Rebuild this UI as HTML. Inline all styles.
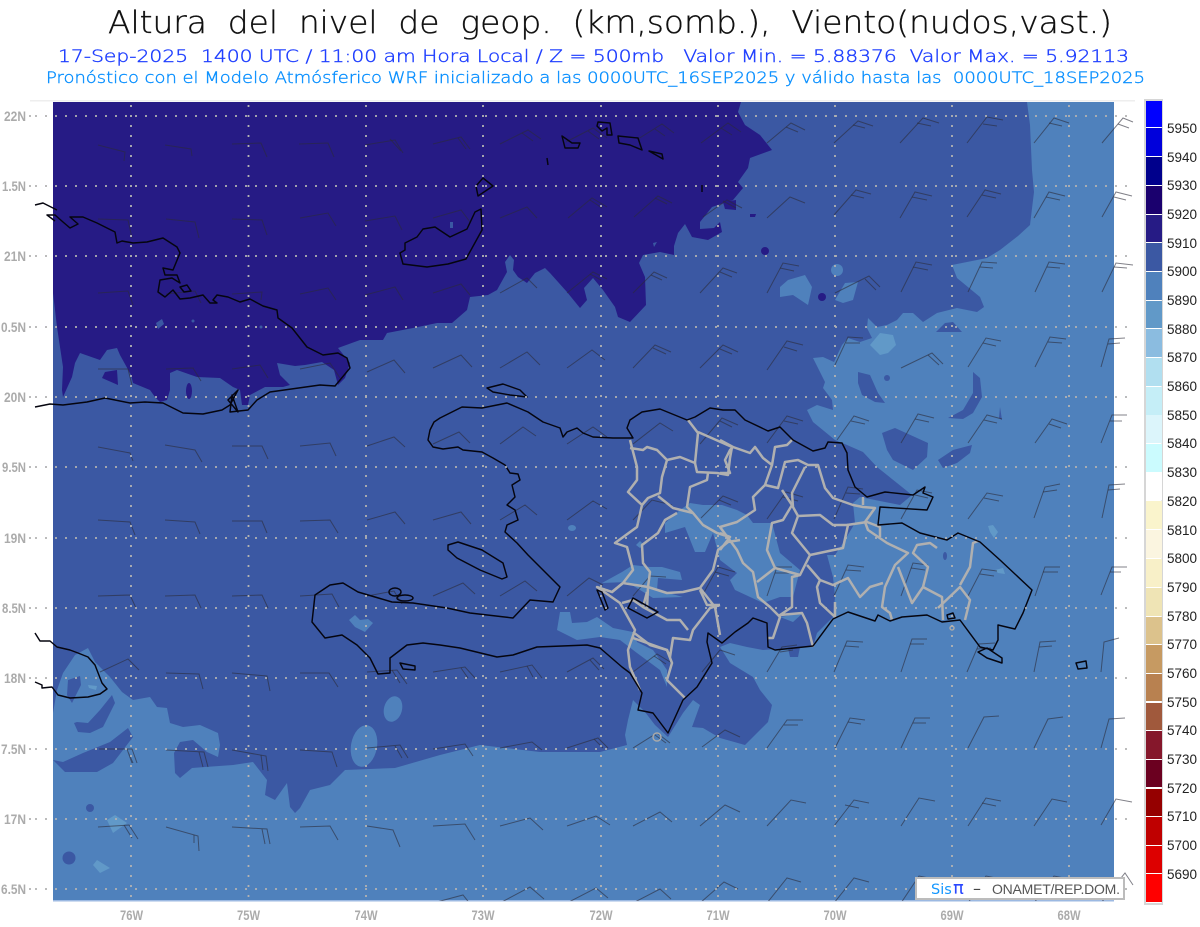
<!DOCTYPE html>
<html lang="es"><head><meta charset="utf-8"><title>Altura del nivel de geop.</title>
<style>
html,body{margin:0;padding:0;background:#fff;width:1200px;height:927px;overflow:hidden}
svg{display:block;position:absolute;left:0;top:0}
text{white-space:pre}
.t{font-family:"DejaVu Sans","Liberation Sans",sans-serif}
.ax{font-family:"Liberation Sans",sans-serif;font-weight:700;font-size:14px;fill:#ababab}
.cb{font-family:"Liberation Sans",sans-serif;font-size:13.500px;fill:#222}
</style></head><body>
<svg width="1200" height="927" viewBox="0 0 1200 927" xmlns="http://www.w3.org/2000/svg">
<defs><clipPath id="m"><rect x="53" y="102" width="1061" height="799"/></clipPath>
<clipPath id="b"><rect x="0" y="102" width="1145" height="799"/></clipPath></defs>

<text class="t" x="108" y="33" font-size="31" font-weight="200" fill="#111" stroke="#111" stroke-width=".35" textLength="1004" lengthAdjust="spacingAndGlyphs">Altura  del  nivel  de  geop.  (km,somb.),  Viento(nudos,vast.)</text>
<text class="t" x="58" y="62" font-size="17" font-weight="200" fill="#1f3fff" stroke="#1f3fff" stroke-width=".4" textLength="1071" lengthAdjust="spacingAndGlyphs">17-Sep-2025  1400 UTC / 11:00 am Hora Local / Z = 500mb   Valor Min. = 5.88376  Valor Max. = 5.92113</text>
<text class="t" x="46" y="83" font-size="16" font-weight="200" fill="#0a90ff" stroke="#0a90ff" stroke-width=".4" textLength="1099" lengthAdjust="spacingAndGlyphs">Pronóstico con el Modelo Atmósferico WRF inicializado a las 0000UTC_16SEP2025 y válido hasta las  0000UTC_18SEP2025</text>

<rect x="30" y="100" width="1105" height="1.5" fill="#eeeeee"/>
<rect x="53" y="102" width="1061" height="799" fill="#4f81bc"/>
<rect x="53" y="900" width="1061" height="1.5" fill="#9cb9e2"/>

<g clip-path="url(#m)">
<path fill="#3b58a3" d="M53 102H1027L1030 125 1032 170 1034 192 1030 225 1018 236 1000 250 987 258 952 265 957 278 980 297 984 307 977 312 957 308 937 313 923 322 913 313 903 313 897 320 887 325 877 327 868 318 867 328 872 338 860 342 848 338 842 345 834 362 823 357 813 358 825 382 823 388 832 400 833 410 817 405 807 410 813 422 835 440 847 445 863 452 877 467 897 483 912 495 900 505 860 497 853 503 855 523 843 543 835 555 827 555 833 577 835 597 833 617 817 633 813 647 800 647 798 657 790 657 788 648 763 650 747 647 730 643 720 647 730 663 753 677 760 690 772 705 768 722 755 735 745 745 720 738 703 728 692 727 700 705 693 700 683 713 668 737 655 725 645 712 633 700 628 720 625 735 627 745 600 752 540 752 480 745 440 755 395 768 345 770 330 785 310 790 300 808 295 813 290 807 287 783 275 800 265 795 267 780 253 762 233 765 205 767 192 768 180 778 175 773 174 753 180 742 193 740 207 752 218 757 220 745 218 733 200 725 183 727 170 723 167 708 157 707 150 697 133 700 122 692 110 677 95 662 88 648 75 655 63 673 57 690 53 713Z"/>
<g fill="#3b58a3">
<path d="M53 760 65 772 97 772 113 763 133 737 128 728 110 742 83 753 63 762Z"/>
<path d="M68 680 80 676 81 685 72 703 67 695Z"/>
<path d="M74 723 78 732 90 733 103 727 115 703 112 695 100 710 88 723 77 722Z"/>
<circle cx="90" cy="808" r="4"/><circle cx="69" cy="858" r="6.500"/>
<path d="M858 372 870 375 878 393 885 403 875 402 862 395 858 383Z"/>
<path d="M882 433 895 428 928 443 927 457 913 470 893 460 887 450Z"/>
<path d="M973 372 980 378 982 397 973 413 963 419 948 418 963 410 973 393Z"/>
<path d="M938 460 953 450 972 445 970 453 957 463 943 468Z"/>
<path d="M936 332 945 323 953 322 962 332Z"/>
<path d="M1000 407 1002 420 999 418Z"/><circle cx="887" cy="378" r="3"/>
<ellipse cx="945" cy="556" rx="2" ry="4"/>
</g>
<g fill="#4f81bc">
<path d="M349 620 355 615 360 620 368 619 373 623 365 632 355 627Z"/>
<ellipse cx="393" cy="709" rx="9" ry="13" transform="rotate(15 393 709)"/>
<ellipse cx="364" cy="746" rx="13" ry="21" transform="rotate(10 364 746)"/>
<path d="M557 630 560 612 570 612 572 623 587 622 597 617 613 628 633 632 637 642 653 650 667 670 667 687 660 670 637 653 620 640 600 637 577 640Z"/>
<path d="M602 583 622 572 633 565 650 567 662 567 680 572 682 580 658 578 657 590 683 597 653 598 627 582Z"/>
<path d="M720 525 737 522 747 515 753 523 772 523 780 553 800 570 793 597 780 597 763 603 735 590 730 580 737 573 720 560Z"/>
<path d="M690 503 703 505 722 505 737 510 747 515 737 525 720 560 713 533 705 552 695 552 685 527 665 533 665 523 680 510Z"/>
<path d="M780 617 803 613 793 622Z"/>
<path d="M780 287 788 280 805 275 812 287 808 305 793 295 780 297Z"/>
<circle cx="837" cy="270" r="6"/>
<path d="M845 283 858 282 853 300 843 303 835 300Z"/>
<path d="M636 545 640 541 644 545 640 548Z"/><path d="M450 221 454 222 453 228 450 228Z"/>
<ellipse cx="572" cy="528" rx="4" ry="3"/>
</g>
<path fill="#261b85" d="M53 102H741L738 112 745 125 760 135 772 150 750 158 748 168 738 182 743 188 733 200 712 207 700 222 700 229 714 228 720 222 722 232 708 240 692 237 685 224 678 233 674 246 674 255 660 252 643 255 639 263 645 277 646 305 630 322 618 317 615 307 603 290 593 278 584 288 587 300 580 308 567 292 550 273 545 268 535 273 527 283 518 277 513 270 514 260 510 255 505 262 507 272 497 290 488 295 470 297 467 310 452 323 437 323 413 328 387 333 383 340 360 340 338 348 350 363 345 378 338 385 334 370 322 362 305 365 295 366 277 363 280 375 290 385 283 387 265 387 250 395 248 405 242 405 240 390 233 387 220 378 197 377 177 370 170 373 170 390 167 400 160 402 155 397 150 390 133 383 131 375 120 355 117 348 107 350 100 360 80 353 75 363 72 377 63 397 62 390 63 367 57 327 53 293Z"/>
<g fill="#261b85">
<path d="M117 370 118 385 102 378 105 372Z"/><ellipse cx="189" cy="391" rx="3" ry="8"/>
<circle cx="765" cy="251" r="4"/><path d="M750 214 756 214 755 217 750 217Z"/><circle cx="822" cy="297" r="4"/>
<path d="M723 202 736 200 736 210 725 209Z"/>
</g>
<g fill="#3b58a3">
<path d="M156 323 162 319 164 324 158 329Z"/><circle cx="193" cy="321" r="1.500"/><circle cx="261" cy="327" r="1.500"/>
<path d="M450 222 453 222 453 228 450 228Z"/><path d="M653 243 657 242 654 247Z"/>
</g>
<g fill="#6199c8">
<path d="M870 345 880 333 893 335 896 345 888 353 880 355Z"/>
<path d="M97 860 110 868 100 873 93 865Z"/>
<path d="M107 820 115 815 127 823 113 833Z"/>
<path d="M88 685 97 686 96 690 89 688Z"/>
<path d="M988 526 993 525 998 532 994 538 990 532Z"/>
<path d="M995 570 1003 568 1005 574 998 573Z"/>
</g>
</g>

<g fill="none" stroke="#2b2b38" stroke-width="1" stroke-opacity=".6" clip-path="url(#b)">
<path d="M98 145l27 7l-1 9M165 145l26 4l1 7M232 144l29 -1l6 14M299 144l29 -1l6 14M365 145l30 -5l8 13M433 144l28 -7l9 12M500 144l28 -14l13 9M566 142l27 -14l14 10M638 139l24 -15l12 9M701 143l27 -20l13 9M767 143l24 -20l14 7M834 143l24 -22l15 5M900 143l23 -25l16 5M967 143l20 -26l16 3M1034 143l20 -25l15 5M1102 143l21 -25l10 4"/>
<path d="M98 219l30 1l4 18M166 219l29 3l4 16M232 219l30 1l5 15M300 218l28 -5l8 13M365 221l30 -5l7 14M433 218l28 -8l9 12M500 218l27 -11l10 11M568 218l24 -20l15 9M634 217l24 -21l14 7M703 217l24 -17l15 8M767 218l23 -21l15 6M834 215l22 -25l15 4M900 218l15 -26l17 4M967 217l18 -27l16 4M1034 218l15 -26l16 4M1102 217l14 -25l16 4"/>
<path d="M98 293l30 -2l5 14M166 294l29 -3l6 12M232 294l30 -2l-1 8M300 294l28 -6l8 12M365 295l30 -8l8 13M433 293l28 -9l9 11M500 293l27 -15l10 10M567 293l26 -21l14 7M633 293l21 -21l13 6M700 293l23 -25l14 5M767 293l16 -30l16 3M835 293l34 -17l11 11M901 292l15 -30l16 3M968 292l14 -30l15 1M1035 292l14 -30l16 2M1102 292l14 -29l17 2"/>
<path d="M98 369l30 0l4 16M166 369l27 -1l8 13M232 369l28 -4l8 13M300 369l30 -6l10 15M367 372l27 -12l11 13M433 368l28 -13l11 12M500 368l27 -16l13 13M567 368l25 -18l13 10M633 368l22 -23l16 7M700 368l23 -23l15 7M767 370l20 -29l16 4M834 367l14 -30l15 1M901 368l31 -15l11 11M968 367l18 -29l15 3M1035 367l15 -30l16 2M1101 367l8 -28l16 -1"/>
<path d="M98 447l32 6l3 8M165 445l30 5l7 12M232 446l30 0l6 13M300 446l30 -3l6 13M367 446l27 -9l11 10M433 444l26 -12l11 11M500 444l23 -17l13 9M567 444l26 -17l14 10M633 444l27 -21l13 8M700 444l22 -26l16 7M767 443l20 -27l16 5M837 440l17 -24l15 5M901 443l17 -29l16 4M968 443l19 -28l15 4M1035 443l17 -24l15 5M1101 443l11 -28l15 0"/>
<path d="M98 520l32 2l5 13M165 520l30 2l5 12M232 521l30 0l5 12M300 521l30 -1l8 13M367 520l28 -8l10 12M433 520l28 -8l10 12M500 520l25 -15l12 10M567 520l26 -19l14 8M633 520l19 -20l20 5M701 518l22 -22l15 6M767 519l19 -27l17 5M834 519l14 -32l15 2M901 519l16 -29l15 3M968 519l19 -26l16 3M1034 518l11 -31l15 -3M1102 518l7 -33l16 -1"/>
<path d="M98 596l32 -1l6 13M165 596l30 -1l6 13M232 596l30 -1l6 13M300 596l32 -2l7 13M367 596l27 -5l8 13M433 596l30 -13l12 11M500 596l25 -15l12 10M567 596l22 -18l14 7M633 596l17 -20l16 1M702 596l16 -29l17 5M767 596l10 -29l15 0M834 596l14 -31l16 2M901 596l12 -33l15 2M968 596l14 -27l15 2M1035 596l10 -29l15 0M1101 595l11 -28l15 0"/>
<path d="M100 672l28 -13l11 11M166 673l33 1l4 15M232 673l35 3l3 15M300 673l29 0l9 14M367 672l30 -2l10 14M433 672l32 -5l10 11M500 672l32 -7l10 13M567 672l26 -14l11 11M633 672l24 -18l15 9M702 672l18 -22l15 5M767 672l15 -25l15 -2M834 672l13 -31l16 1M901 672l11 -33l15 0M967 672l12 -28l16 -1M1034 672l6 -30l16 -1M1101 672l3 -30l15 -4"/>
<path d="M99 749l33 0l5 14M166 750l38 2l4 15M232 750l34 6l2 15M300 750l32 2l5 15M367 748l33 -3l8 13M433 749l32 -5l8 12M500 748l32 -6l10 8M567 748l31 -10l10 10M633 748l24 -15l13 10M702 747l23 -17l15 7M767 748l20 -28l16 0M835 748l15 -30l15 2M901 748l14 -30l15 0M968 748l16 -31l15 -1M1034 748l14 -29l15 -2M1101 748l8 -29l16 -1"/>
<path d="M98 827l31 -2l9 14M166 827l32 9l1 15M232 827l35 2l3 15M300 827l30 -1l8 14M367 826l26 4l7 17M433 826l32 -2l10 16M500 826l30 -8l13 12M567 826l29 -10l14 9M633 826l27 -14l12 10M700 826l25 -21l15 7M767 826l24 -26l15 3M834 826l20 -26l15 3M901 826l18 -28l16 3M968 826l18 -28l15 3M1034 826l18 -27l15 3M1101 825l15 -26l16 3"/>
<path d="M433 903l30 -8l8 10M500 903l30 -16l14 12M567 903l29 -15l12 10M633 903l27 -14l11 10M700 903l24 -21l14 7M767 903l20 -25l14 4M834 903l20 -25l15 4M901 903l18 -27l15 3M968 903l18 -27l15 3M1034 903l20 -27l15 3M1101 903l24 -30l8 12"/>
<path d="M390 139l11 12M458 138l8 11M522 133l11 8M588 131l11 8M655 129l10 7M721 128l11 7M786 127l12 5M853 125l12 3M917 123l14 3M983 124l14 2M1049 123l13 3M1118 124l11 4"/>
<path d="M590 200l12 8M655 198l12 6M723 201l13 7M851 195l13 3M912 197l15 3M982 195l14 3M1046 197l14 3M1114 197l12 3"/>
<path d="M590 274l11 6M651 275l11 5M720 272l12 5M780 268l14 3M865 279l11 11M913 267l15 3M980 267l13 1M1047 267l13 1M1114 267l13 1"/>
<path d="M653 348l13 6M720 349l12 5M784 347l13 4M846 343l14 0M928 355l11 10M983 343l13 3M1048 342l14 1M1108 344l12 -1"/>
<path d="M720 421l12 6M784 421l14 3M851 421l14 3M915 419l14 3M984 420l13 3M1049 424l12 4M1110 421l12 0"/>
<path d="M719 500l12 5M783 497l15 4M846 493l14 1M915 495l13 3M984 498l15 3M1043 492l14 -2M1108 490l12 -1"/>
<path d="M715 572l14 4M775 573l15 0M846 570l15 1M911 568l14 2M980 574l14 2M1043 572l15 0M1110 572l11 0"/>
<path d="M392 670l8 13M461 668l7 10M527 666l6 11M590 660l9 10M654 656l12 8M780 652l13 -2M845 646l14 1M910 644l14 0M977 649l14 -1M1039 647l13 -1"/>
<path d="M127 749l5 14M128 752l5 11M199 752l4 15M261 755l2 15M395 746l7 12M594 739l9 9M655 735l11 8M784 725l14 0M848 722l13 2M913 723l13 0"/>
<path d="M124 825l8 13M194 835l0 8M262 829l3 15M845 805l14 3M982 803l14 3"/>
</g>

<g fill="none" stroke="#b0b0b0" stroke-width="2.500" stroke-linejoin="round" clip-path="url(#m)">
<path d="M630 440 637 467 637 480 628 492 642 505 637 527 615 543 627 547 633 570 623 583 612 592 597 587 620 603 635 630 628 650 630 667 640 690"/>
<path d="M630 448 643 450 647 447 657 450 667 460 680 457 695 463 698 433 688 420"/>
<path d="M667 460 662 477 660 493 648 498 642 505"/>
<path d="M695 463 697 472 717 473 728 475 730 458 732 447 698 432"/>
<path d="M708 473 707 480 690 487 687 507 693 513 703 525 717 533 730 537"/>
<path d="M658 496 673 508 693 513"/>
<path d="M677 513 665 520 658 533 642 545 643 563 650 572 648 587 647 610"/>
<path d="M623 583 648 587 667 593 683 592 700 588 713 570 718 550 728 542 740 540"/>
<path d="M700 588 715 607 720 635"/>
<path d="M720 440 733 447 750 453 755 447 763 458 772 465 775 447 787 445 792 440"/>
<path d="M772 465 765 485 753 497 755 510 737 522 720 527 737 550 743 563 753 572 755 582 758 597 770 607 780 617 773 638 767 638"/>
<path d="M765 485 778 488 785 462 798 460 808 465 818 465 825 488 833 498 853 505 863 507 875 508 865 522 868 530 887 543 908 553 895 565 885 587 882 607 890 613 892 620"/>
<path d="M805 467 792 493 793 507 798 516 820 515 833 525 848 525 843 548 810 555 792 533 798 516"/>
<path d="M782 490 792 505 783 520 772 523 767 550 775 568 757 582"/>
<path d="M810 555 800 575 775 568"/>
<path d="M800 575 792 577 792 607 780 615 802 613 807 623 813 647"/>
<path d="M807 565 820 580 817 587 820 603 835 617 835 602"/>
<path d="M820 580 833 585 848 578 860 597 870 587 883 583"/>
<path d="M847 525 867 522 880 527 880 537"/>
<path d="M863 497 863 505"/>
<path d="M937 548 930 543 917 545 913 553 928 567 923 587 912 603 898 567"/>
<path d="M923 587 942 597 943 620"/>
<path d="M938 608 960 587 970 600 965 620"/>
<path d="M960 585 970 567 973 543 978 541"/>
<path d="M733 447 730 450 725 460 730 473 720 473"/>
<path d="M720 533 730 537 720 550"/>
<path d="M633 632 650 645 667 650 670 657 673 638 690 640 693 630 710 608 720 605"/>
<path d="M647 592 643 607 667 620 680 620 688 630"/>
<path d="M622 603 633 600 643 607"/>
<path d="M633 638 667 650 672 663 667 680 685 698"/>
<path d="M700 590 707 605 720 605"/>
<path d="M597 587 612 592 623 583"/>
</g>

<g fill="none" stroke="#05050f" stroke-width="1.450" stroke-linejoin="round">
<path d="M434 422 440 418 462 407 482 408 507 403 528 412 543 422 560 428 563 437 567 432 577 428 583 433 593 437 613 438 633 438 627 428 630 420 642 412 660 409 687 420 695 417 710 408 723 410 735 410 745 420 768 431 780 427 793 440 813 451 825 448 828 442 842 443 847 453 848 470 855 487 867 497 885 492 913 495 925 487 923 493 933 497 927 510 880 507 878 525 902 523 920 533 947 540 958 533 980 542 1000 560 1032 590 1023 613 1015 629 998 625 998 640 993 650 980 647 960 620 942 622 927 615 902 617 890 621 878 615 875 621 848 612 833 619 813 646 775 650 768 647 767 623 753 618 748 623 735 632 722 643 708 633 707 642 712 663 697 687 683 700 668 733 653 713 638 710 642 693 630 673 622 667 600 648 587 645 537 647 513 655 497 657 460 648 440 645 423 643 407 645 390 658 390 673 378 674 370 658 357 645 342 635 325 638 312 622 315 595 330 585 343 583 358 592 375 597 392 602 413 603 447 608 470 613 513 618 530 600 553 602 560 587 543 570 528 555 517 543 505 532 507 525 518 520 515 510 507 505 515 497 512 485 520 480 518 474 510 473 505 465 493 458 482 452 463 450 458 447 443 449 433 447 428 440 430 430Z"/>
<path d="M448 545 458 542 482 550 503 563 507 577 502 579 480 570 457 558 448 550Z"/>
<path d="M487 388 503 384 520 390 527 397 510 395 493 392Z"/>
<ellipse cx="395" cy="592" rx="6" ry="4"/><ellipse cx="405" cy="598" rx="8" ry="3"/>
<path d="M400 663 415 666 415 670 403 669Z"/>
<path d="M597 590 605 610 608 608 602 592Z"/><path d="M633 598 658 612 647 618 628 608Z"/>
<circle cx="657" cy="737" r="4" stroke="#aaa"/>
<path d="M978 652 987 648 1002 658 1002 663 987 658Z"/>
<path d="M947 615 953 613 955 618 948 619Z"/>
<path d="M1076 663 1086 661 1087 668 1078 669Z"/>
<circle cx="952" cy="628" r="2" stroke="#aaa"/>
<path d="M35 407 50 404 63 405 87 402 105 398 130 403 145 402 163 403 183 413 203 414 222 410 230 405 238 390 228 400 238 412 232 395 230 412 248 410 257 400 270 392 320 385 335 386 350 368 347 358 338 353 323 355 307 347 292 328 278 318 277 310 263 306 250 299 240 302 228 297 217 295 213 300 217 303 210 303 203 295 190 298 180 299 173 290 165 297 158 292 160 280 172 278 180 283 177 275 165 275 163 268 173 270 180 253 177 247 163 238 147 242 133 243 122 241 117 243 115 232 97 223 83 217 70 217 78 224 70 228 63 222 55 215 47 215 55 221"/>
<path d="M180 287 187 285 191 291 184 292Z"/>
<path d="M35 205 43 203 57 210"/>
<path d="M405 243 417 237 423 229 435 227 450 237 467 229 475 212 481 209 482 230 466 259 448 264 427 267 403 264 400 253 405 250Z"/>
<path d="M476 186 483 178 493 186 478 196Z"/>
<path d="M598 122 610 123 612 135 607 135 607 128 602 131 597 126Z"/>
<path d="M562 136 572 143 580 143 578 148 565 148Z"/>
<path d="M618 136 638 138 642 150 630 145 619 143Z"/>
<path d="M649 151 662 154 663 159Z"/>
<path d="M547 158 548 165"/><path d="M702 185 702 192"/>
<path d="M35 633 40 641 50 641 57 647 70 650 78 653 88 657 95 665 102 683 107 689 100 694 88 697 70 698 58 695 52 687 42 688 42 685 35 682"/>
</g>

<g fill="none" stroke="#b2b2b2" stroke-width="1.800" stroke-dasharray="2 8">
<path d="M35 116H1135M35 186H1135M35 256H1135M35 327H1135M35 397H1135M35 467H1135M35 538H1135M35 608H1135M35 678H1135M35 749H1135M35 819H1135M35 889H1135"/>
<path d="M131 105V905M248.500 105V905M366 105V905M483 105V905M601 105V905M718 105V905M835 105V905M952 105V905M1069 105V905"/>
<path d="M29 116h2M29 186h2M29 256h2M29 327h2M29 397h2M29 467h2M29 538h2M29 608h2M29 678h2M29 749h2M29 819h2M29 889h2"/>
</g>

<g class="ax">
<text x="4" y="121" textLength="22" lengthAdjust="spacingAndGlyphs">22N</text>
<text x="2" y="191" textLength="24" lengthAdjust="spacingAndGlyphs">1.5N</text>
<text x="4" y="261" textLength="22" lengthAdjust="spacingAndGlyphs">21N</text>
<text x="1" y="332" textLength="25" lengthAdjust="spacingAndGlyphs">0.5N</text>
<text x="4" y="402" textLength="22" lengthAdjust="spacingAndGlyphs">20N</text>
<text x="2" y="472" textLength="24" lengthAdjust="spacingAndGlyphs">9.5N</text>
<text x="4" y="543" textLength="22" lengthAdjust="spacingAndGlyphs">19N</text>
<text x="2" y="613" textLength="24" lengthAdjust="spacingAndGlyphs">8.5N</text>
<text x="4" y="683" textLength="22" lengthAdjust="spacingAndGlyphs">18N</text>
<text x="1" y="754" textLength="25" lengthAdjust="spacingAndGlyphs">7.5N</text>
<text x="4" y="824" textLength="22" lengthAdjust="spacingAndGlyphs">17N</text>
<text x="1" y="894" textLength="25" lengthAdjust="spacingAndGlyphs">6.5N</text>
<text x="120" y="920" textLength="23" lengthAdjust="spacingAndGlyphs">76W</text>
<text x="237" y="920" textLength="23" lengthAdjust="spacingAndGlyphs">75W</text>
<text x="354.500" y="920" textLength="23" lengthAdjust="spacingAndGlyphs">74W</text>
<text x="471.500" y="920" textLength="23" lengthAdjust="spacingAndGlyphs">73W</text>
<text x="589.500" y="920" textLength="23" lengthAdjust="spacingAndGlyphs">72W</text>
<text x="706.500" y="920" textLength="23" lengthAdjust="spacingAndGlyphs">71W</text>
<text x="823.500" y="920" textLength="23" lengthAdjust="spacingAndGlyphs">70W</text>
<text x="940.500" y="920" textLength="23" lengthAdjust="spacingAndGlyphs">69W</text>
<text x="1057.500" y="920" textLength="23" lengthAdjust="spacingAndGlyphs">68W</text>
</g>

<rect x="916" y="878" width="208" height="21" fill="#fff" stroke="#bcbcbc" stroke-width="2"/>
<text font-family="'DejaVu Sans','Liberation Sans',sans-serif" font-size="14.500" y="894"><tspan x="931" fill="#1497ff">Sis</tspan><tspan x="953" fill="#2a48ff" font-size="18">π</tspan><tspan x="973" fill="#444" font-size="16">–</tspan></text>
<text font-family="'Liberation Sans',sans-serif" font-size="14" y="894" x="992" fill="#555" textLength="128" lengthAdjust="spacing">ONAMET/REP.DOM.</text>

<rect x="1144" y="99" width="19" height="806" fill="#d6d6d6"/>
<rect x="1146" y="101" width="15.600" height="802" fill="#fff"/>
<g>
<rect x="1146" y="101" width="16" height="26" fill="#0000ff"/>
<rect x="1146" y="128" width="16" height="28" fill="#0000db"/>
<rect x="1146" y="157" width="16" height="28" fill="#00008c"/>
<rect x="1146" y="186" width="16" height="28" fill="#1a006e"/>
<rect x="1146" y="215" width="16" height="27" fill="#261b85"/>
<rect x="1146" y="243" width="16" height="28" fill="#3b58a3"/>
<rect x="1146" y="272" width="16" height="28" fill="#4f81bc"/>
<rect x="1146" y="301" width="16" height="27" fill="#6199c8"/>
<rect x="1146" y="329" width="16" height="28" fill="#8bbce0"/>
<rect x="1146" y="358" width="16" height="28" fill="#b1dff0"/>
<rect x="1146" y="387" width="16" height="28" fill="#c5eef7"/>
<rect x="1146" y="415" width="16" height="28" fill="#dcf5fb"/>
<rect x="1146" y="444" width="16" height="28" fill="#cbfbfe"/>
<rect x="1146" y="472" width="16" height="28" fill="#ffffff"/>
<rect x="1146" y="501" width="16" height="28" fill="#faf4cc"/>
<rect x="1146" y="530" width="16" height="28" fill="#fbf5e0"/>
<rect x="1146" y="559" width="16" height="28" fill="#f8f0c8"/>
<rect x="1146" y="588" width="16" height="28" fill="#efe4b5"/>
<rect x="1146" y="617" width="16" height="27" fill="#dcc28c"/>
<rect x="1146" y="645" width="16" height="28" fill="#c69a62"/>
<rect x="1146" y="674" width="16" height="27" fill="#b88150"/>
<rect x="1146" y="703" width="16" height="27" fill="#a0593c"/>
<rect x="1146" y="731" width="16" height="28" fill="#85172b"/>
<rect x="1146" y="760" width="16" height="27" fill="#6b0020"/>
<rect x="1146" y="789" width="16" height="27" fill="#950000"/>
<rect x="1146" y="817" width="16" height="28" fill="#bf0000"/>
<rect x="1146" y="846" width="16" height="27" fill="#dd0000"/>
<rect x="1146" y="874" width="16" height="28" fill="#ff0000"/>
</g>
<g class="cb">
<text x="1167" y="133">5950</text><text x="1167" y="162">5940</text><text x="1167" y="190">5930</text><text x="1167" y="219">5920</text><text x="1167" y="248">5910</text><text x="1167" y="276">5900</text><text x="1167" y="305">5890</text><text x="1167" y="334">5880</text><text x="1167" y="362">5870</text><text x="1167" y="391">5860</text><text x="1167" y="420">5850</text><text x="1167" y="448">5840</text><text x="1167" y="477">5830</text><text x="1167" y="506">5820</text><text x="1167" y="535">5810</text><text x="1167" y="563">5800</text><text x="1167" y="592">5790</text><text x="1167" y="621">5780</text><text x="1167" y="649">5770</text><text x="1167" y="678">5760</text><text x="1167" y="707">5750</text><text x="1167" y="735">5740</text><text x="1167" y="764">5730</text><text x="1167" y="793">5720</text><text x="1167" y="821">5710</text><text x="1167" y="850">5700</text><text x="1167" y="879">5690</text>
</g>
</svg>
</body></html>
